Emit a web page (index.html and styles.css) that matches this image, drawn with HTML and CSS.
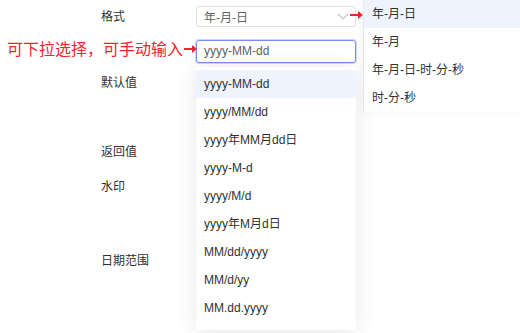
FILE: index.html
```html
<!DOCTYPE html>
<html lang="zh-CN">
<head>
  <meta charset="UTF-8" />
  <meta name="viewport" content="width=device-width, initial-scale=1.0" />
  <title>日期格式</title>
  <link rel="stylesheet" href="styles.css">
</head>
<body>
  <div class="page">
    <div class="form">
      <div class="row row-format">
        <div class="label">格式</div>
        <div class="control">
          <div class="select">
            <span>年-月-日</span>
            <svg class="chevron" width="12" height="7" viewBox="0 0 12 7">
              <path d="M1 1 L6 6 L11 1" fill="none" stroke="#c0c4cc" stroke-width="1.1" />
            </svg>
          </div>
          <span class="arrow arrow-menu"></span>
        </div>
      </div>

      <div class="row row-input">
        <div class="label note">
          <span>可下拉选择，可手动输入</span>
          <span class="arrow"></span>
        </div>
        <div class="control">
          <div class="input">yyyy-MM-dd</div>
        </div>
      </div>

      <div class="row row-default">
        <div class="label">默认值</div>
      </div>
      <div class="row row-return">
        <div class="label">返回值</div>
      </div>
      <div class="row row-mark">
        <div class="label">水印</div>
      </div>
      <div class="row row-range">
        <div class="label">日期范围</div>
      </div>
    </div>

    <ul class="dropdown">
      <li class="active">yyyy-MM-dd</li>
      <li>yyyy/MM/dd</li>
      <li>yyyy年MM月dd日</li>
      <li>yyyy-M-d</li>
      <li>yyyy/M/d</li>
      <li>yyyy年M月d日</li>
      <li>MM/dd/yyyy</li>
      <li>MM/d/yy</li>
      <li>MM.dd.yyyy</li>
    </ul>

    <ul class="menu">
      <li class="active">年-月-日</li>
      <li>年-月</li>
      <li>年-月-日-时-分-秒</li>
      <li>时-分-秒</li>
    </ul>
  </div>
</body>
</html>
```

FILE: styles.css
```css
body {
  margin: 0;
  background: #fff;
  font-family: 'Liberation Sans', 'Noto Sans CJK SC', sans-serif;
  font-size: 12px;
  color: #303133;
}

.page {
  position: relative;
  width: 520px;
  height: 333px;
  overflow: hidden;
}

.form {
  padding-top: 6px;
}

.row {
  display: flex;
  align-items: center;
}

.label {
  width: 196px;
  flex: none;
  box-sizing: border-box;
  padding-left: 101px;
  line-height: 18px;
}

.control {
  display: flex;
  align-items: center;
}

.row-format {
  height: 21px;
}

.row-input {
  height: 22px;
  margin-top: 13px;
}

.row-default {
  margin-top: 12px;
  height: 18px;
}

.row-return {
  margin-top: 51px;
  height: 18px;
}

.row-mark {
  margin-top: 17px;
  height: 18px;
}

.row-range {
  margin-top: 56px;
  height: 18px;
}

.select {
  width: 160px;
  height: 21px;
  box-sizing: border-box;
  border: 1px solid #dcdfe6;
  border-radius: 3px;
  display: flex;
  align-items: center;
  justify-content: space-between;
  padding: 0 7px;
  color: #606266;
}

.chevron {
  margin-right: -1px;
}

.input {
  width: 160px;
  height: 23px;
  box-sizing: border-box;
  border: 1px solid #7b8bf7;
  border-radius: 3px;
  box-shadow: 0 0 0 1px rgba(123, 139, 247, 0.35);
  padding: 0 7px;
  display: flex;
  align-items: center;
  color: #606266;
}

.note {
  padding-left: 7px;
  display: flex;
  align-items: center;
  color: #f5222d;
  font-size: 16px;
  line-height: 20px;
  margin-top: -2px;
}

.note .arrow {
  margin-top: -3px;
}

.arrow {
  position: relative;
  display: inline-block;
  width: 10px;
  height: 2px;
  background: #f5222d;
  margin-left: 1px;
}

.arrow::after {
  content: "";
  position: absolute;
  right: -3px;
  top: -3px;
  border-left: 5px solid #f5222d;
  border-top: 4px solid transparent;
  border-bottom: 4px solid transparent;
}

.arrow-menu {
  margin-left: -6px;
  margin-top: -4px;
}

.dropdown,
.menu {
  list-style: none;
  margin: 0;
  position: absolute;
  background: #fff;
  box-sizing: border-box;
}

.dropdown {
  left: 196px;
  top: 67px;
  width: 160px;
  height: 263px;
  padding: 3px 0 0;
  border-radius: 3px;
  box-shadow: 0 2px 22px rgba(0, 0, 0, 0.1);
}

.menu {
  left: 363px;
  top: 0;
  width: 160px;
  height: 112px;
  padding: 0;
  border-left: 1px solid #e4e7ed;
  box-shadow: -2px 0 6px rgba(0, 0, 0, 0.04);
}

.dropdown li,
.menu li {
  height: 28px;
  line-height: 28px;
  padding-left: 8px;
  white-space: nowrap;
}

.dropdown li.active,
.menu li.active {
  background: #eff3fd;
}
```
